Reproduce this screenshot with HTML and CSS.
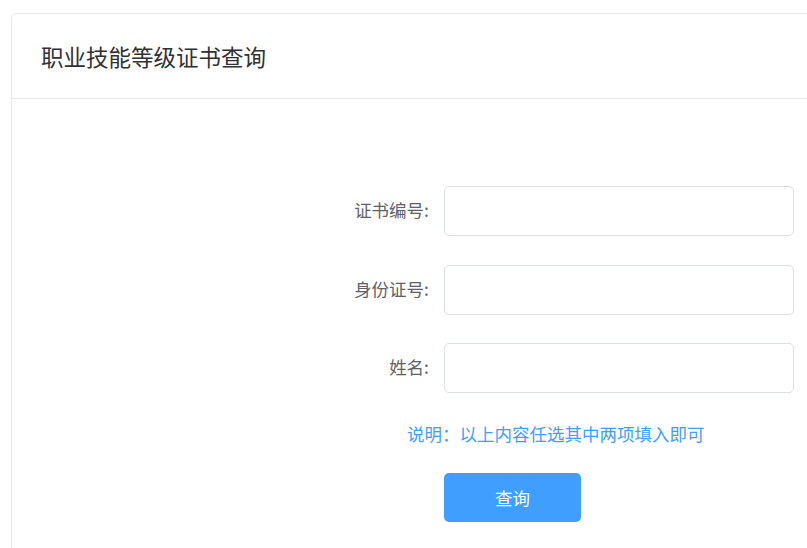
FILE: index.html
```html
<!DOCTYPE html>
<html lang="zh-CN">
<head>
  <meta charset="UTF-8" />
  <meta name="viewport" content="width=device-width, initial-scale=1.0"/>
  <title>职业技能等级证书查询</title>
  <link rel="stylesheet" href="styles.css">
</head>
<body>
  <div class="card">
    <div class="card-header">
      <h1>职业技能等级证书查询</h1>
    </div>

    <div class="card-body">
      <form id="queryForm" class="query-form">
        <label class="form-label" for="certNo">证书编号:</label>
        <input class="form-input" type="text" id="certNo" />

        <label class="form-label" for="idNo">身份证号:</label>
        <input class="form-input" type="text" id="idNo" />

        <label class="form-label" for="name">姓名:</label>
        <input class="form-input" type="text" id="name" />
      </form>

      <p class="note">说明：以上内容任选其中两项填入即可</p>

      <div class="actions">
        <button type="submit" form="queryForm" class="btn-primary">查询</button>
      </div>
    </div>
  </div>
</body>
</html>
```

FILE: styles.css
```css
html, body {
  overflow: hidden;
}

body {
  font-family: "Microsoft YaHei", "Noto Sans CJK SC", "Noto Sans", sans-serif;
  margin: 0;
  padding: 13px 0 0 11px;
  background: #fff;
  color: #606266;
}

.card {
  width: 820px;
  height: 560px;
  border: 1px solid #e8e8e8;
  border-radius: 5px;
  background: #fff;
  box-sizing: border-box;
}

.card-header {
  height: 85px;
  padding: 0 29px;
  display: flex;
  align-items: center;
  border-bottom: 1px solid #e8e8e8;
  box-sizing: border-box;
}

.card-header h1 {
  margin: 0;
  font-size: 22.5px;
  font-weight: normal;
  color: #303133;
}

.card-body {
  padding-top: 87px;
}

.query-form {
  display: grid;
  grid-template-columns: 432px 350px;
  grid-auto-rows: 50px;
  row-gap: 28.5px;
  align-items: center;
}

.form-label {
  text-align: right;
  padding: 0 15px 3px 0;
  font-size: 17.5px;
  color: #606266;
}

.form-input {
  height: 50px;
  width: 350px;
  box-sizing: border-box;
  border: 1px solid #dcdfe6;
  border-radius: 5px;
  padding: 0 19px;
  font-size: 17.5px;
  outline: none;
}

.note {
  margin: 28px 0 0 395px;
  font-size: 17.5px;
  line-height: 26px;
  color: #409eff;
}

.actions {
  margin: 26px 0 0 432px;
}

.btn-primary {
  width: 137px;
  height: 49px;
  background: #409eff;
  border: none;
  border-radius: 5px;
  color: #fff;
  font-family: inherit;
  font-size: 17.5px;
  cursor: pointer;
}

.btn-primary:hover {
  background: #66b1ff;
}
```
